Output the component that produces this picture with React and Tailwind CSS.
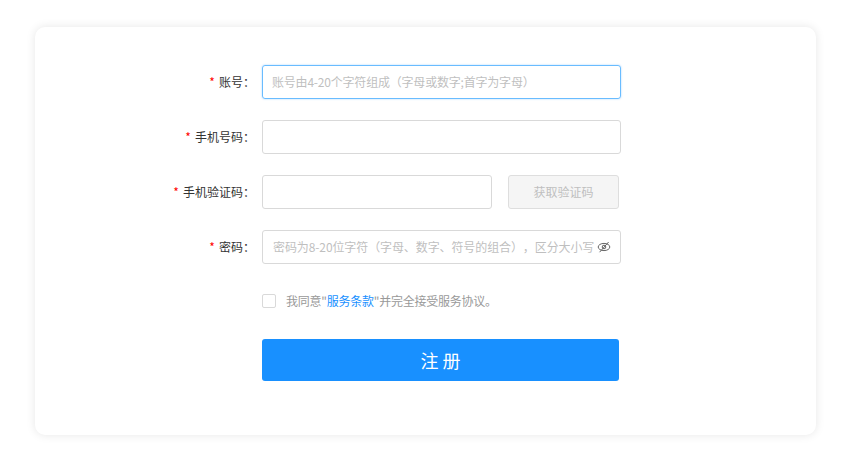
import React from 'react';

const cjk = { fontFamily: '"Noto Sans CJK SC", "Noto Sans", sans-serif' };

const EyeOff = () => (
  <svg width="14" height="14" viewBox="0 0 14 14" fill="none" stroke="#666" strokeWidth="1" className="shrink-0">
    <ellipse cx="7" cy="7" rx="5.8" ry="3.6" />
    <circle cx="7" cy="7" r="1.8" />
    <path d="M2.6 12.2 11.6 2" />
  </svg>
);

const Field = ({ label, children }) => (
  <div className="flex items-center h-[34px] mb-[21px]">
    <label className="w-[227px] pr-[7px] text-right text-[12px] text-[#333] leading-none">
      <span className="text-[#f00] mr-[4px]">*</span>
      {label}：
    </label>
    {children}
  </div>
);

const App = () => {
  return (
    <div className="h-[455px] w-[860px] bg-white pt-[27px] pl-[35px]" style={cjk}>
      <div className="w-[781px] h-[408px] bg-white rounded-[10px] shadow-[0_0_10px_rgba(0,0,0,0.1)] pt-[38px]">
        <Field label="账号">
          <div className="w-[359px] h-[34px] rounded-[3px] border border-[#69bcff] shadow-[0_0_2px_rgba(24,144,255,0.4)] flex items-center pl-[9px] pr-[10px] text-[12px] tracking-[-0.2px] text-[#bfbfbf]">
            账号由4-20个字符组成（字母或数字;首字为字母）
          </div>
        </Field>
        <Field label="手机号码">
          <div className="w-[359px] h-[34px] rounded-[3px] border border-[#d9d9d9]" />
        </Field>
        <Field label="手机验证码">
          <div className="w-[230px] h-[34px] rounded-[3px] border border-[#d9d9d9]" />
          <button className="ml-[16px] w-[111px] h-[34px] rounded-[3px] border border-[#dedede] bg-[#f5f5f5] text-[12px] text-[#bfbfbf]">
            获取验证码
          </button>
        </Field>
        <Field label="密码">
          <div className="w-[359px] h-[34px] rounded-[3px] border border-[#d9d9d9] flex items-center justify-between pl-[10px] pr-[9px] text-[12px] text-[#bfbfbf]">
            <span className="[text-spacing-trim:space-all] tracking-[-0.1px]">密码为8-20位字符（字母、数字、符号的组合），区分大小写</span>
            <EyeOff />
          </div>
        </Field>
        <div className="flex items-center ml-[227px] mt-[30px] h-[14px] text-[12px] tracking-[-0.25px] text-[#999]">
          <span className="w-[14px] h-[14px] rounded-[2px] border border-[#d9d9d9] mr-[10px]" />
          <span>
            我同意"<span className="text-[#1890ff]">服务条款</span>"并完全接受服务协议。
          </span>
        </div>
        <button className="block ml-[227px] mt-[31px] w-[357px] h-[42px] rounded-[3px] bg-[#1890ff] text-white text-[18px]">
          注 册
        </button>
      </div>
    </div>
  );
};

export default App;
